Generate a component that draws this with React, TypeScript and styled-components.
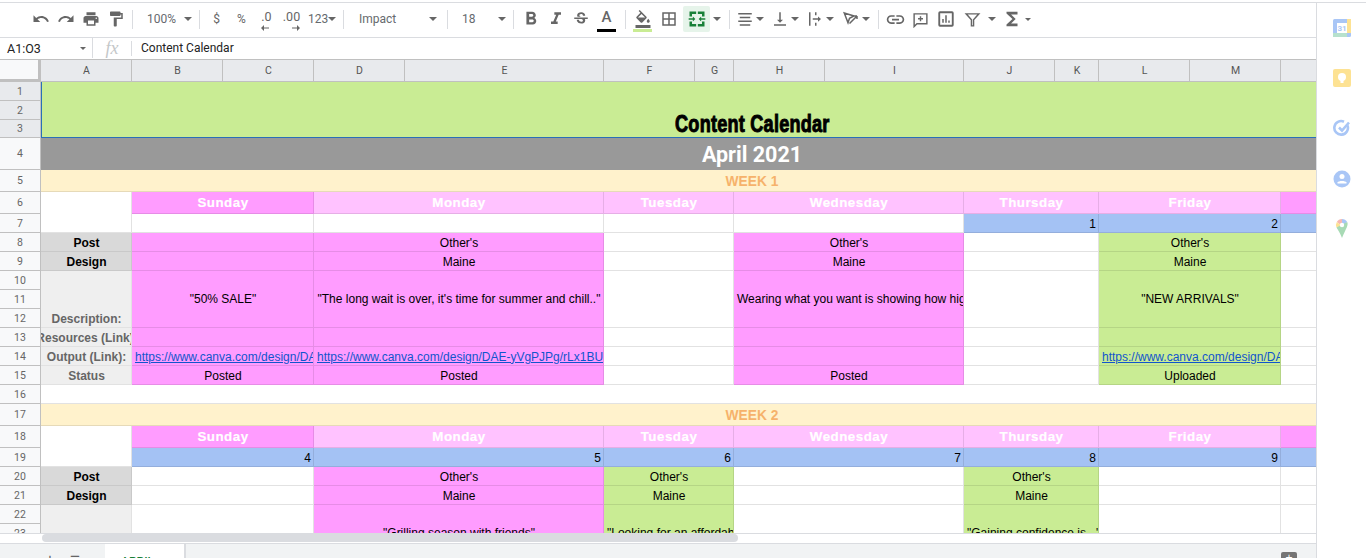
import React, { FC, ReactNode } from 'react'
import styled, { createGlobalStyle } from 'styled-components'
import {
  MdUndo,
  MdRedo,
  MdPrint,
  MdFormatPaint,
  MdFormatBold,
  MdFormatItalic,
  MdStrikethroughS,
  MdFormatColorFill,
  MdBorderAll,
  MdVerticalAlignBottom,
  MdLink,
  MdFunctions,
} from 'react-icons/md'

const iconColor = '#666666'
const lineColor = '#dadce0'
const headerLine = '#c0c0c0'

type Tone = 'white' | 'pink' | 'light' | 'green' | 'blue' | 'label' | 'soft' | 'cream' | 'gray' | 'lime'

const tones: Record<Tone, { bg: string; line: string }> = {
  white: { bg: '#ffffff', line: '#e2e2e2' },
  pink: { bg: '#ff9cff', line: '#e68ce6' },
  light: { bg: '#ffc2ff', line: '#e6aee6' },
  green: { bg: '#c9ec94', line: '#b5d585' },
  blue: { bg: '#a4c2f4', line: '#94aedc' },
  label: { bg: '#d9d9d9', line: '#c9c9c9' },
  soft: { bg: '#efefef', line: '#e2e2e2' },
  cream: { bg: '#fff2cc', line: '#e6dab8' },
  gray: { bg: '#999999', line: '#999999' },
  lime: { bg: '#c9ec94', line: '#2a6fb8' },
}

const GlobalStyle = createGlobalStyle`
  html, body {
    margin: 0;
    height: 100%;
    overflow: hidden;
    background: #ffffff;
  }
  * {
    box-sizing: border-box;
  }
`

const Page = styled.div`
  width: 1366px;
  height: 558px;
  padding-top: 2px;
  display: flex;
  flex-direction: column;
  font-family: 'Liberation Sans', Arial, sans-serif;
  overflow: hidden;
`

const Body = styled.div`
  flex: 1;
  min-height: 0;
  display: flex;
  border-top: 1px solid ${lineColor};
`

const Main = styled.div`
  width: 1316px;
  display: flex;
  flex-direction: column;
  overflow: hidden;
`

const SidePanel = styled.aside`
  width: 50px;
  border-left: 1px solid ${lineColor};
  display: flex;
  flex-direction: column;
`

const SideSlot = styled.div`
  height: 50.2px;
  display: flex;
  align-items: center;
  justify-content: center;
`

const Toolbar = styled.div`
  height: 35px;
  flex: none;
  display: flex;
  align-items: center;
  padding-left: 28px;
  padding-bottom: 2px;
  border-bottom: 1px solid ${lineColor};
  color: ${iconColor};
  font-family: Roboto, sans-serif;
  font-size: 12px;
`

const Tool = styled.div<{ $w?: number; $active?: boolean; $icon?: number }>`
  width: ${(p) => p.$w ?? 25}px;
  height: 26px;
  flex: none;
  position: relative;
  display: flex;
  align-items: center;
  justify-content: center;
  background: ${(p) => (p.$active ? '#e6f4ea' : 'transparent')};
  border-radius: 2px;
  svg {
    font-size: ${(p) => p.$icon ?? 18}px;
  }
`

const Drop = styled.div<{ $w: number }>`
  width: ${(p) => p.$w}px;
  height: 26px;
  flex: none;
  display: flex;
  align-items: center;
  svg {
    width: 22px;
    font-size: 18px;
    flex: none;
  }
`

const Select = styled.div<{ $w: number; $left: number; $right: number }>`
  width: ${(p) => p.$w}px;
  flex: none;
  display: flex;
  align-items: center;
  justify-content: space-between;
  padding: 0 ${(p) => p.$right}px 0 ${(p) => p.$left}px;
  color: #666a6e;
`

const Caret = styled.span<{ $small?: boolean }>`
  flex: none;
  width: 0;
  height: 0;
  border-style: solid;
  border-color: ${iconColor} transparent transparent;
  border-width: ${(p) => (p.$small ? '3px 3px 0' : '4px 4px 0')};
`

const Divider = styled.span<{ $before?: number }>`
  flex: none;
  width: 1px;
  height: 19px;
  margin: 0 4px 0 ${(p) => p.$before ?? 4}px;
  background: ${lineColor};
`

const ColorBar = styled.span<{ $color: string }>`
  position: absolute;
  left: calc(50% - 9.5px);
  width: 19px;
  bottom: 0;
  height: 3px;
  background: ${(p) => p.$color};
`

const TextColorGlyph = styled.span`
  font-size: 15px;
  font-weight: 500;
  margin-bottom: 5px;
`

const Decimal = styled.span`
  position: relative;
  top: -3px;
  font-size: 12.5px;
`

const DecimalArrow = styled.svg<{ $right?: boolean }>`
  position: absolute;
  left: ${(p) => (p.$right ? '13px' : '7px')};
  top: 19px;
  width: 8px;
  height: 6px;
`

const FormulaBar = styled.div`
  height: 22px;
  flex: none;
  display: flex;
  align-items: center;
  padding-bottom: 1px;
  border-bottom: 1px solid ${headerLine};
  font-family: Roboto, sans-serif;
  font-size: 12.5px;
  color: #222222;
`

const NameBox = styled.div`
  width: 93px;
  height: 100%;
  flex: none;
  display: flex;
  align-items: center;
  justify-content: space-between;
  padding: 0 6px 0 7px;
  border-right: 1px solid ${lineColor};
`

const FxBox = styled.div`
  width: 39px;
  height: 15px;
  flex: none;
  display: flex;
  align-items: center;
  justify-content: center;
  border-right: 1px solid ${lineColor};
  font-family: 'Liberation Serif', serif;
  font-style: italic;
  font-size: 18px;
  color: #c4c7c9;
`

const FormulaText = styled.div`
  padding-left: 9px;
  font-size: 12px;
`

const SheetViewport = styled.div`
  flex: 1;
  min-height: 0;
  overflow: hidden;
`

const columnWidths = [41, 91, 91, 91, 91, 199, 91, 39, 91, 139, 91, 44, 91, 91, 91, 91]
const rowHeights = [22, 19, 19, 18, 32, 22, 22, 19, 19, 19, 19, 19, 19, 19, 19, 19, 19, 22, 22, 19, 19, 19, 19, 19, 19]

const SheetGrid = styled.div`
  display: grid;
  width: ${columnWidths.reduce((a, b) => a + b, 0)}px;
  grid-template-columns: ${columnWidths.map((w) => `${w}px`).join(' ')};
  grid-template-rows: ${rowHeights.map((h) => `${h}px`).join(' ')};
`

const Corner = styled.div`
  grid-column: 1;
  grid-row: 1;
  background: #f8f9fa;
  border-right: 3px solid ${headerLine};
  border-bottom: 3px solid ${headerLine};
`

const ColHead = styled.div<{ $col: number }>`
  grid-column: ${(p) => p.$col};
  grid-row: 1;
  display: flex;
  align-items: center;
  justify-content: center;
  padding-left: 1px;
  background: #e8eaed;
  border-right: 1px solid ${headerLine};
  border-bottom: 1px solid ${headerLine};
  font-family: Roboto, sans-serif;
  font-size: 10.5px;
  color: #555555;
`

const RowHead = styled.div<{ $row: number; $selected?: boolean }>`
  grid-column: 1;
  grid-row: ${(p) => p.$row + 1};
  display: flex;
  align-items: center;
  justify-content: center;
  background: ${(p) => (p.$selected ? '#e8eaed' : '#f8f9fa')};
  border-right: 1px solid ${headerLine};
  border-bottom: 1px solid ${headerLine};
  font-family: Roboto, sans-serif;
  font-size: 10.5px;
  color: #666666;
`

const Cell = styled.div<{
  $col: number
  $span?: number
  $row: number
  $rows?: number
  $tone: Tone
  $justify?: string
  $valign?: string
}>`
  grid-column: ${(p) => p.$col} / span ${(p) => p.$span ?? 1};
  grid-row: ${(p) => p.$row + 1} / span ${(p) => p.$rows ?? 1};
  min-width: 0;
  display: flex;
  align-items: ${(p) => p.$valign ?? 'center'};
  justify-content: ${(p) => p.$justify ?? 'center'};
  padding: ${(p) => ((p.$rows ?? 1) > 1 ? '0 2px 1px 3px' : '1px 2px 0 3px')};
  overflow: hidden;
  white-space: nowrap;
  font-size: 12px;
  color: #000000;
  background: ${(p) => tones[p.$tone].bg};
  border-right: 1px solid ${(p) => tones[p.$tone].line};
  border-bottom: 1px solid ${(p) => tones[p.$tone].line};
`

const TitleCell = styled(Cell)`
  border-right: 0;
  border-left: 1px solid #2a6fb8;
  padding: 0;
`

const TitleText = styled.span`
  display: inline-block;
  font-size: 23.5px;
  line-height: 25px;
  font-weight: 700;
  letter-spacing: 0.3px;
  -webkit-text-stroke: 1px #000000;
  transform: scaleX(0.77);
`

const MonthText = styled.span`
  font-family: Roboto, sans-serif;
  font-size: 21.5px;
  font-weight: 700;
  color: #ffffff;
`

const WeekText = styled.span`
  font-size: 13.8px;
  font-weight: 700;
  color: #f6b26b;
`

const DayText = styled.span`
  margin-top: -1px;
  font-size: 13.33px;
  font-weight: 700;
  letter-spacing: 0.5px;
  -webkit-text-stroke: 0.2px #ffffff;
  color: #ffffff;
`

const LabelText = styled.span<{ $muted?: boolean; $nudge?: number }>`
  font-weight: 700;
  margin-right: ${(p) => p.$nudge ?? 0}px;
  color: ${(p) => (p.$muted ? '#666666' : '#000000')};
`

const SheetLink = styled.span`
  color: #1155cc;
  text-decoration: underline;
`

const ScrollTrack = styled.div`
  height: 10px;
  flex: none;
  padding: 1px 0 1px 42px;
  border-top: 1px solid ${lineColor};
`

const ScrollThumb = styled.div`
  width: 696px;
  height: 8px;
  margin-top: -1px;
  border-radius: 4px;
  background: #dadce0;
`

const TabBar = styled.div`
  height: 15px;
  flex: none;
  display: flex;
  align-items: flex-start;
  overflow: hidden;
  background: #f1f3f4;
  border-top: 1px solid ${lineColor};
  color: ${iconColor};
`

const TabTool = styled.div<{ $w: number }>`
  width: ${(p) => p.$w}px;
  flex: none;
  display: flex;
  justify-content: center;
  padding-top: 9px;
  font-size: 17px;
  line-height: 14px;
`

const SheetTab = styled.div`
  width: 81px;
  height: 15px;
  flex: none;
  margin-left: 11px;
  padding: 11px 0 0 16px;
  background: #ffffff;
  border-right: 2px solid #dadce0;
  font-family: Roboto, sans-serif;
  font-size: 12px;
  font-weight: 500;
  color: #188038;
`

const ExploreButton = styled.div`
  width: 16px;
  height: 14px;
  margin: 8px 19px 0 auto;
  border-radius: 2px;
  background: #757575;
  color: #ffffff;
  font-size: 12px;
  line-height: 12px;
  text-align: center;
`

const MergeIcon: FC = () => (
  <svg width="1em" height="1em" viewBox="0 0 24 24" fill="#188038">
    <path d="M3 3h8v3H6v3H3zM13 3h8v6h-3V6h-5zM3 15h3v3h5v3H3zM18 15h3v6h-8v-3h5z" />
    <path d="M2 11h5V9l3 3-3 3v-2H2zM22 11h-5V9l-3 3 3 3v-2h5z" />
  </svg>
)

const AlignIcon: FC = () => (
  <svg width="1em" height="1em" viewBox="0 0 24 24" fill={iconColor}>
    <path d="M3 4h18v2H3zM5 9h14v2H5zM3 14h18v2H3zM5 19h14v2H5z" />
  </svg>
)

const WrapIcon: FC = () => (
  <svg width="1em" height="1em" viewBox="0 0 24 24" fill={iconColor}>
    <path d="M4 3h2v18H4zM12 3h2v4h-2zM12 17h2v4h-2zM9 11h7V8.500l4 3.500-4 3.500V13H9z" />
  </svg>
)

const RotateIcon: FC = () => (
  <svg width="1em" height="1em" viewBox="0 0 24 24" fill="none" stroke={iconColor} strokeWidth="2">
    <path d="M3 4l13 4-6 3-2 6zM10 18L20 8M20 8h-4M20 8v4" />
  </svg>
)

const CommentIcon: FC = () => (
  <svg width="1em" height="1em" viewBox="0 0 24 24" fill="none" stroke={iconColor} strokeWidth="2">
    <path d="M3 4h18v14H7l-4 4zM12 7.500v7M8.500 11h7" />
  </svg>
)

const ChartIcon: FC = () => (
  <svg width="1em" height="1em" viewBox="0 0 24 24" fill="none" stroke={iconColor}>
    <rect x="3" y="3" width="18" height="18" rx="1" strokeWidth="2.500" />
    <path d="M8 17v-5M12 17V7M16 17v-3" strokeWidth="2" />
  </svg>
)

const FilterIcon: FC = () => (
  <svg width="1em" height="1em" viewBox="0 0 24 24" fill="none" stroke={iconColor} strokeWidth="2">
    <path d="M3 4h18l-7.500 8.500V21h-3v-8.500z" />
  </svg>
)

const CalendarIcon: FC = () => (
  <svg width="18" height="18" viewBox="0 0 18 18">
    <rect width="18" height="18" rx="1.500" fill="#a9c6f6" />
    <rect x="14" width="4" height="14" fill="#fde293" />
    <rect y="14" width="14" height="4" fill="#b7e1cd" />
    <rect x="4" y="4" width="10" height="10" fill="#ffffff" />
    <text x="9" y="12" textAnchor="middle" fontSize="8" fontWeight="700" fontFamily="Roboto, sans-serif" fill="#a9c6f6">
      31
    </text>
  </svg>
)

const KeepIcon: FC = () => (
  <svg width="18" height="18" viewBox="0 0 18 18">
    <rect width="18" height="18" rx="2" fill="#fde293" />
    <circle cx="9" cy="8" r="4" fill="#ffffff" />
    <rect x="7.500" y="11" width="3" height="3" fill="#ffffff" />
  </svg>
)

const TasksIcon: FC = () => (
  <svg width="18" height="18" viewBox="0 0 18 18" fill="none" stroke="#a9c6f6" strokeWidth="2.600">
    <path d="M14.500 6.500A6.800 6.800 0 1 1 11 2.700" />
    <path d="M6 8.500l3 3 7-8" />
  </svg>
)

const ContactsIcon: FC = () => (
  <svg width="18" height="18" viewBox="0 0 18 18">
    <circle cx="9" cy="9" r="8.500" fill="#a9c6f6" />
    <circle cx="9" cy="6.500" r="2.500" fill="#ffffff" />
    <path d="M4.500 12.500c1-2 8-2 9 0v1h-9z" fill="#ffffff" />
  </svg>
)

const MapsIcon: FC = () => (
  <svg width="14" height="19" viewBox="0 0 14 19">
    <path d="M7 0a6 6 0 0 1 5.200 3L7 7z" fill="#a9c6f6" />
    <path d="M7 0a6 6 0 0 0-5.200 3L7 7z" fill="#f6b8b1" />
    <path d="M1.800 3a6 6 0 0 0-.3 5.500L7 7z" fill="#fde293" />
    <path d="M12.200 3c1.500 3-1 6-5.200 16C5 14 3 11 1.500 8.500z" fill="#a8dab5" />
    <circle cx="7" cy="6" r="2.200" fill="#ffffff" />
  </svg>
)

// column lines of the seven day slots, a line number and how many columns it spans
const slots: [number, number][] = [
  [3, 2],
  [5, 2],
  [7, 2],
  [9, 2],
  [11, 2],
  [13, 2],
  [15, 1],
]

interface Day {
  head: string
  headTone: Tone
  date?: string
  tone: Tone
  post?: string
  design?: string
  desc?: string
  left?: boolean
  link?: string
  status?: string
}

const week1: Day[] = [
  {
    head: 'Sunday',
    headTone: 'pink',
    tone: 'pink',
    desc: '"50% SALE"',
    link: 'https://www.canva.com/design/DAE-yVgPJPg/rLx1BU',
    status: 'Posted',
  },
  {
    head: 'Monday',
    headTone: 'light',
    tone: 'pink',
    post: "Other's",
    design: 'Maine',
    desc: '"The long wait is over, it\'s time for summer and chill.."',
    link: 'https://www.canva.com/design/DAE-yVgPJPg/rLx1BU',
    status: 'Posted',
  },
  { head: 'Tuesday', headTone: 'light', tone: 'white' },
  {
    head: 'Wednesday',
    headTone: 'light',
    tone: 'pink',
    post: "Other's",
    design: 'Maine',
    desc: 'Wearing what you want is showing how high your confidence is',
    left: true,
    status: 'Posted',
  },
  { head: 'Thursday', headTone: 'light', date: '1', tone: 'white' },
  {
    head: 'Friday',
    headTone: 'light',
    date: '2',
    tone: 'green',
    post: "Other's",
    design: 'Maine',
    desc: '"NEW ARRIVALS"',
    link: 'https://www.canva.com/design/DAE-yVgPJPg/rLx1BU',
    status: 'Uploaded',
  },
  { head: '', headTone: 'pink', date: ' ', tone: 'white' },
]

const week2: Day[] = [
  { head: 'Sunday', headTone: 'pink', date: '4', tone: 'white' },
  {
    head: 'Monday',
    headTone: 'light',
    date: '5',
    tone: 'pink',
    post: "Other's",
    design: 'Maine',
    desc: '"Grilling season with friends"',
  },
  {
    head: 'Tuesday',
    headTone: 'light',
    date: '6',
    tone: 'green',
    post: "Other's",
    design: 'Maine',
    desc: '"Looking for an affordable outfit?"',
    left: true,
  },
  { head: 'Wednesday', headTone: 'light', date: '7', tone: 'white' },
  {
    head: 'Thursday',
    headTone: 'light',
    date: '8',
    tone: 'green',
    post: "Other's",
    design: 'Maine',
    desc: '"Gaining confidence is..."',
    left: true,
  },
  { head: 'Friday', headTone: 'light', date: '9', tone: 'white' },
  { head: '', headTone: 'pink', date: ' ', tone: 'white' },
]

const WeekBlock: FC<{ top: number; days: Day[]; short?: boolean }> = ({ top, days, short }) => {
  const labels: ReactNode = (
    <>
      <Cell $col={2} $row={top} $rows={2} $tone="white" />
      <Cell $col={2} $row={top + 2} $tone="label">
        <LabelText>Post</LabelText>
      </Cell>
      <Cell $col={2} $row={top + 3} $tone="label">
        <LabelText>Design</LabelText>
      </Cell>
      <Cell $col={2} $row={top + 4} $rows={3} $tone="soft" $valign="flex-end">
        <LabelText $muted>Description:</LabelText>
      </Cell>
      {!short && (
        <>
          <Cell $col={2} $row={top + 7} $tone="soft">
            <LabelText $muted $nudge={3}>Resources (Link)</LabelText>
          </Cell>
          <Cell $col={2} $row={top + 8} $tone="soft">
            <LabelText $muted>Output (Link):</LabelText>
          </Cell>
          <Cell $col={2} $row={top + 9} $tone="soft">
            <LabelText $muted>Status</LabelText>
          </Cell>
        </>
      )}
    </>
  )

  return (
    <>
      {labels}
      {days.map((day, i) => {
        const [col, span] = slots[i]
        return (
          <React.Fragment key={i}>
            <Cell $col={col} $span={span} $row={top} $tone={day.headTone}>
              <DayText>{day.head}</DayText>
            </Cell>
            <Cell $col={col} $span={span} $row={top + 1} $tone={day.date ? 'blue' : 'white'} $justify="flex-end">
              {day.date}
            </Cell>
            <Cell $col={col} $span={span} $row={top + 2} $tone={day.tone}>
              {day.post}
            </Cell>
            <Cell $col={col} $span={span} $row={top + 3} $tone={day.tone}>
              {day.design}
            </Cell>
            <Cell
              $col={col}
              $span={span}
              $row={top + 4}
              $rows={3}
              $tone={day.tone}
              $justify={day.left ? 'flex-start' : 'center'}
            >
              {day.desc}
            </Cell>
            {!short && (
              <>
                <Cell $col={col} $span={span} $row={top + 7} $tone={day.tone} />
                <Cell $col={col} $span={span} $row={top + 8} $tone={day.tone} $justify="flex-start">
                  {day.link && <SheetLink>{day.link}</SheetLink>}
                </Cell>
                <Cell $col={col} $span={span} $row={top + 9} $tone={day.tone}>
                  {day.status}
                </Cell>
              </>
            )}
          </React.Fragment>
        )
      })}
    </>
  )
}

const App: FC = () => {
  return (
    <Page>
      <GlobalStyle />
      <Body>
        <Main>
          <Toolbar>
            <Tool><MdUndo /></Tool>
            <Tool><MdRedo /></Tool>
            <Tool><MdPrint /></Tool>
            <Tool><MdFormatPaint /></Tool>
            <Divider />
            <Select $w={58} $left={10} $right={3}>
              100%
              <Caret />
            </Select>
            <Divider />
            <Tool>$</Tool>
            <Tool>%</Tool>
            <Tool>
              <Decimal>.0</Decimal>
              <DecimalArrow viewBox="0 0 8 6">
                <path d="M8 2.500H3V0L0 3l3 3V3.500h5z" fill={iconColor} />
              </DecimalArrow>
            </Tool>
            <Tool>
              <Decimal>.00</Decimal>
              <DecimalArrow $right viewBox="0 0 8 6">
                <path d="M0 2.500h5V0l3 3-3 3V3.500H0z" fill={iconColor} />
              </DecimalArrow>
            </Tool>
            <Select $w={35} $left={4} $right={3}>
              123
              <Caret />
            </Select>
            <Divider />
            <Select $w={95} $left={11} $right={6}>
              Impact
              <Caret />
            </Select>
            <Divider />
            <Select $w={57} $left={10} $right={3}>
              18
              <Caret />
            </Select>
            <Divider />
            <Tool $icon={22}><MdFormatBold /></Tool>
            <Tool $icon={20}><MdFormatItalic /></Tool>
            <Tool><MdStrikethroughS /></Tool>
            <Tool $w={27}>
              <TextColorGlyph>A</TextColorGlyph>
              <ColorBar $color="#000000" />
            </Tool>
            <Divider $before={5} />
            <Tool>
              <MdFormatColorFill />
              <ColorBar $color="#c9ec94" />
            </Tool>
            <Tool $w={28}><MdBorderAll /></Tool>
            <Tool $w={27} $active $icon={20}><MergeIcon /></Tool>
            <Select $w={14} $left={3} $right={3}>
              <Caret />
            </Select>
            <Divider $before={5} />
            <Drop $w={35}>
              <AlignIcon />
              <Caret />
            </Drop>
            <Drop $w={35}>
              <MdVerticalAlignBottom />
              <Caret />
            </Drop>
            <Drop $w={36}>
              <WrapIcon />
              <Caret />
            </Drop>
            <Drop $w={36}>
              <RotateIcon />
              <Caret />
            </Drop>
            <Divider $before={2} />
            <Tool $icon={21}><MdLink /></Tool>
            <Tool $icon={17}><CommentIcon /></Tool>
            <Tool $icon={18}><ChartIcon /></Tool>
            <Tool $w={28} $icon={17}><FilterIcon /></Tool>
            <Tool $w={12}><Caret /></Tool>
            <Tool $w={27} $icon={22}><MdFunctions /></Tool>
            <Tool $w={6}><Caret $small /></Tool>
          </Toolbar>
          <FormulaBar>
            <NameBox>
              A1:O3
              <Caret $small />
            </NameBox>
            <FxBox>fx</FxBox>
            <FormulaText>Content Calendar</FormulaText>
          </FormulaBar>
          <SheetViewport>
            <SheetGrid>
              <Corner />
              {'ABCDEFGHIJKLMNO'.split('').map((letter, i) => (
                <ColHead key={letter} $col={i + 2}>
                  {letter}
                </ColHead>
              ))}
              {Array.from({ length: 24 }, (_, i) => (
                <RowHead key={i} $row={i + 1} $selected={i < 3}>
                  {i + 1}
                </RowHead>
              ))}
              <TitleCell $col={2} $span={15} $row={1} $rows={3} $tone="lime" $valign="flex-end">
                <TitleText>Content Calendar</TitleText>
              </TitleCell>
              <Cell $col={2} $span={15} $row={4} $tone="gray">
                <MonthText>April 2021</MonthText>
              </Cell>
              <Cell $col={2} $span={15} $row={5} $tone="cream">
                <WeekText>WEEK 1</WeekText>
              </Cell>
              <WeekBlock top={6} days={week1} />
              <Cell $col={2} $span={15} $row={16} $tone="white" />
              <Cell $col={2} $span={15} $row={17} $tone="cream">
                <WeekText>WEEK 2</WeekText>
              </Cell>
              <WeekBlock top={18} days={week2} short />
            </SheetGrid>
          </SheetViewport>
          <ScrollTrack>
            <ScrollThumb />
          </ScrollTrack>
          <TabBar>
            <TabTool $w={44} />
            <TabTool $w={12}>+</TabTool>
            <TabTool $w={38}>≡</TabTool>
            <SheetTab>APRIL</SheetTab>
            <ExploreButton>+</ExploreButton>
          </TabBar>
        </Main>
        <SidePanel>
          <SideSlot><CalendarIcon /></SideSlot>
          <SideSlot><KeepIcon /></SideSlot>
          <SideSlot><TasksIcon /></SideSlot>
          <SideSlot><ContactsIcon /></SideSlot>
          <SideSlot><MapsIcon /></SideSlot>
        </SidePanel>
      </Body>
    </Page>
  )
}

export default App
